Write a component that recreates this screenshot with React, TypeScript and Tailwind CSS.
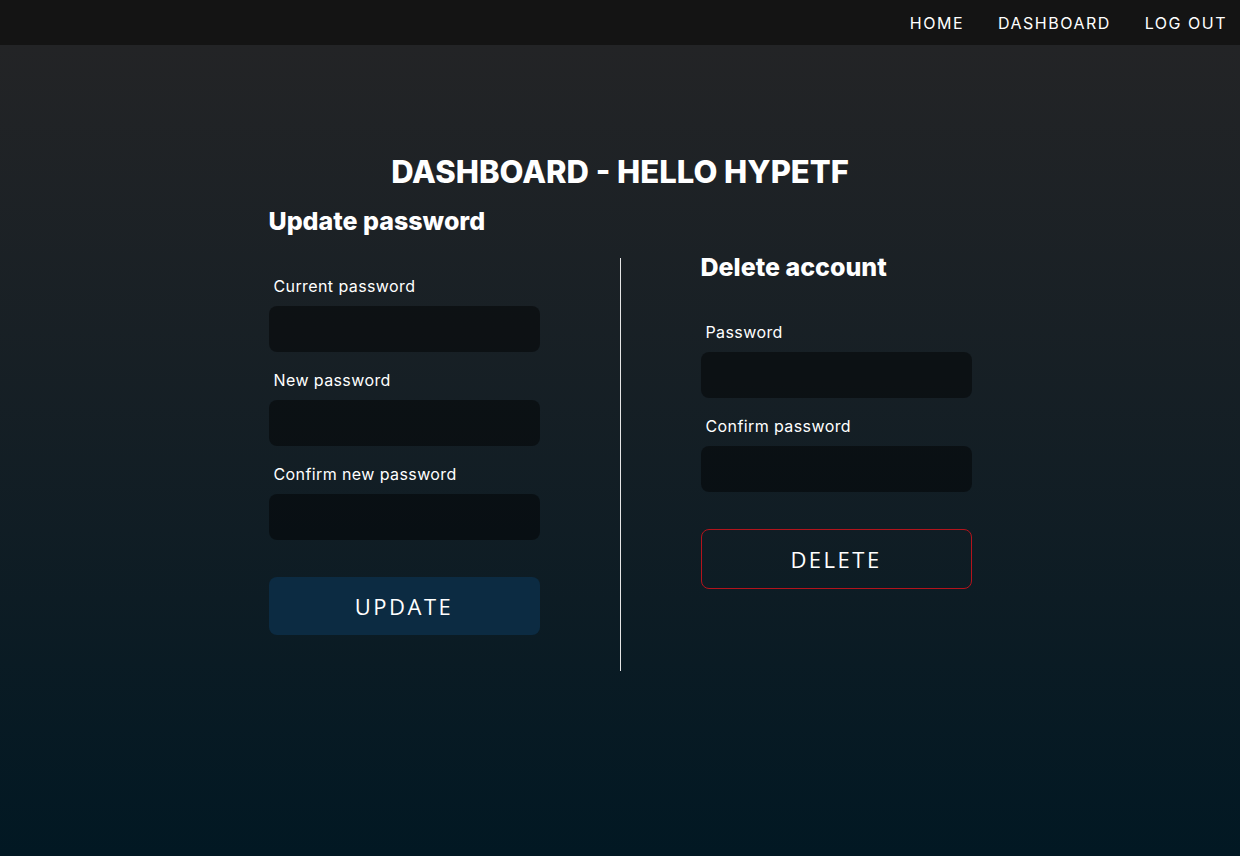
const font = { fontFamily: "Inter, 'Noto Sans', sans-serif" };

interface FieldProps {
  label: string;
  first?: boolean;
}

const Field = ({ label, first }: FieldProps) => (
  <div className={first ? "flex flex-col" : "flex flex-col mt-4"}>
    <label className="pl-[5px] text-[16px] leading-6 tracking-[0.4px] text-white">{label}</label>
    <input
      type="password"
      className="mt-2 h-[46px] w-full rounded-lg bg-black/45 px-3 text-white outline-none"
    />
  </div>
);

export default function App() {
  return (
    <div className="flex min-h-screen flex-col" style={font}>
      <nav className="flex h-[45px] items-center justify-end gap-[34px] bg-[#141414] pr-[13px]">
        <a className="text-[16px] tracking-[1.5px] text-white">HOME</a>
        <a className="text-[16px] tracking-[1.5px] text-white">DASHBOARD</a>
        <a className="text-[16px] tracking-[1.5px] text-white">LOG OUT</a>
      </nav>

      <main className="flex flex-1 flex-col items-center bg-linear-to-b from-[#232426] to-[#021823] pt-[107px]">
        <h1 className="text-[31px] font-extrabold leading-10 text-white">DASHBOARD - HELLO HYPETF</h1>

        <div className="mt-[13px] flex items-start">
          <section className="flex w-[271px] flex-col">
            <h2 className="text-[25px] font-extrabold leading-8 text-white">Update password</h2>
            <div className="mt-[37px] flex flex-col">
              <Field label="Current password" first />
              <Field label="New password" />
              <Field label="Confirm new password" />
            </div>
            <button
              className="mt-[37px] h-[58px] rounded-lg bg-[#0c2b42] text-[22px] tracking-[2.5px] text-white"
              style={{ fontFamily: "'Open Sans', sans-serif" }}
            >
              UPDATE
            </button>
          </section>

          <div className="mx-[80px] mt-[53px] h-[413px] w-px bg-[#e5e5e5]" />

          <section className="mt-[46px] flex w-[271px] flex-col">
            <h2 className="text-[25px] font-extrabold leading-8 text-white">Delete account</h2>
            <div className="mt-[37px] flex flex-col">
              <Field label="Password" first />
              <Field label="Confirm password" />
            </div>
            <button
              className="mt-[37px] h-[60px] rounded-lg border border-[#b3141c] text-[22px] tracking-[2.5px] text-white"
              style={{ fontFamily: "'Open Sans', sans-serif" }}
            >
              DELETE
            </button>
          </section>
        </div>
      </main>
    </div>
  );
}
